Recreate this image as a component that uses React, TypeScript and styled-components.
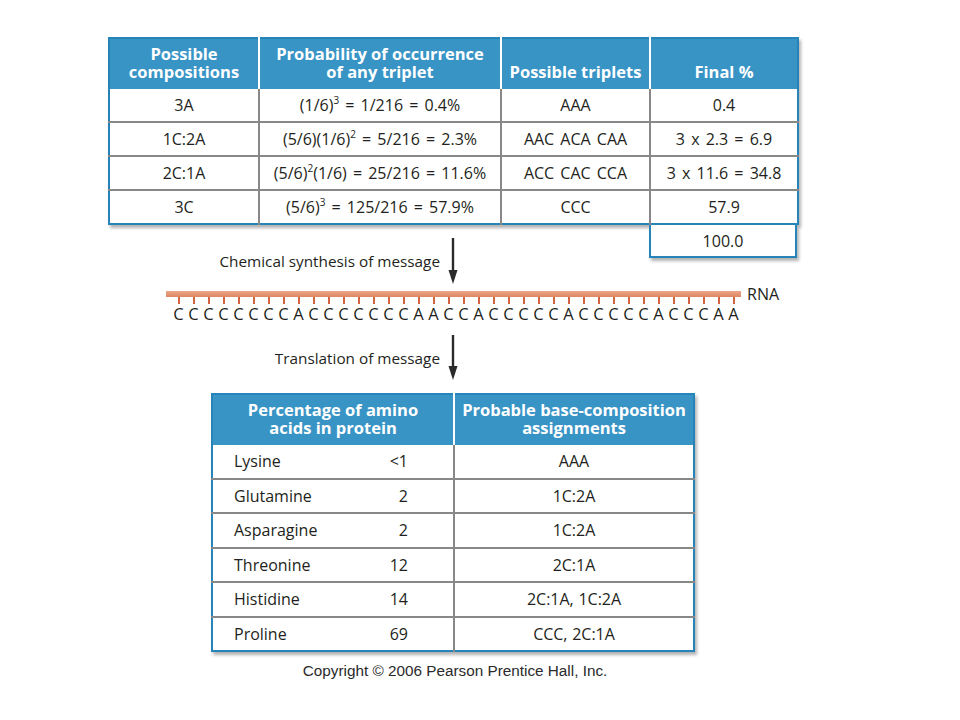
import React from 'react';
import styled, { createGlobalStyle } from 'styled-components';

const GlobalStyle = createGlobalStyle`
  html, body {
    margin: 0;
    padding: 0;
    background: #fff;
  }
  body {
    font-family: "Open Sans", "Noto Sans", sans-serif;
    color: #231f20;
  }
`;

const BLUE = '#2784b8';
const HEAD = '#3994c6';
const GRID = '#888';

const Page = styled.div`
  width: 960px;
  height: 720px;
  box-sizing: border-box;
  padding-top: 37px;
  display: flex;
  flex-direction: column;
`;

const Table = styled.table<{ $left: number; $width: number; $top?: number }>`
  margin-left: ${p => p.$left}px;
  margin-top: ${p => p.$top ?? 0}px;
  width: ${p => p.$width}px;
  border-collapse: collapse;
  table-layout: fixed;
  border: 2px solid ${BLUE};
  box-shadow: 2px 3px 3px rgba(0, 0, 0, 0.3);
  font-size: 16px;
  line-height: 18px;

  tbody tr:first-child td {
    border-top-style: none;
  }
`;

const Th = styled.th`
  height: 42px;
  padding: 0 4px 8px;
  background: ${HEAD};
  color: #fff;
  font-size: 16.5px;
  font-weight: 700;
  line-height: 18px;
  vertical-align: bottom;
  border-left: 2px solid #fff;

  &:first-child {
    border-left-style: none;
  }
`;

const Td = styled.td<{ $h: number; $spread?: boolean }>`
  height: ${p => p.$h}px;
  padding: 0;
  text-align: center;
  vertical-align: middle;
  word-spacing: ${p => (p.$spread ? 2 : 0.5)}px;
  border-top: 2px solid ${GRID};
  border-left: 2px solid ${GRID};

  &:first-child {
    border-left-style: none;
  }
`;

const Sup = styled.sup`
  font-size: 10px;
  line-height: 0;
  vertical-align: 7px;
`;

const AminoCell = styled.div`
  display: flex;
  justify-content: space-between;
  padding: 0 45px 0 21px;
`;

const MidRow = styled.div<{ $top: number }>`
  margin-top: ${p => p.$top}px;
  display: flex;
  align-items: flex-start;
`;

const ArrowLabel = styled.div`
  width: 462px;
  display: flex;
  align-items: center;
  justify-content: flex-end;
  gap: 4px;
  font-size: 15.3px;
  line-height: 18px;
`;

const TotalBox = styled.div`
  margin-left: 187px;
  margin-top: -13px;
  width: 148px;
  height: 33px;
  box-sizing: border-box;
  border: 2px solid ${BLUE};
  border-top: none;
  background: #fff;
  box-shadow: 2px 3px 3px rgba(0, 0, 0, 0.3);
  display: flex;
  align-items: center;
  justify-content: center;
  font-size: 16px;
`;

const Strand = styled.div`
  margin-left: 166px;
  margin-top: 7px;
  display: flex;
  flex-direction: column;
`;

const BarRow = styled.div`
  height: 6px;
  display: flex;
  align-items: center;
`;

const Bar = styled.div`
  width: 575px;
  height: 6px;
  background: linear-gradient(#eba88a, #dd8764);
`;

const RnaLabel = styled.span`
  margin-left: 6px;
  font-size: 16px;
  line-height: 18px;
`;

const Bases = styled.div`
  display: flex;
  padding-left: 5px;
`;

const Base = styled.div`
  width: 15px;
  display: flex;
  flex-direction: column;
  align-items: center;
  font-size: 16.5px;
  line-height: 18px;
`;

const Tick = styled.div`
  width: 2px;
  height: 7px;
  margin-bottom: 1px;
  background: #d4643f;
`;

const Copyright = styled.div`
  width: 910px;
  margin-top: 10px;
  text-align: center;
  font-family: "Liberation Sans", Arial, sans-serif;
  font-size: 15.3px;
  line-height: 18px;
  color: #2a2a2a;
`;

const DownArrow = ({ h }: { h: number }) => (
  <svg width="18" height={h} viewBox={`0 0 18 ${h}`}>
    <line x1="9" y1="0" x2="9" y2={h - 10} stroke="#2b2b2b" strokeWidth="2.4" />
    <polygon points={`4.5,${h - 14} 13.5,${h - 14} 9,${h}`} fill="#2b2b2b" />
  </svg>
);

const tripletRows = [
  { comp: '3A', prob: <>(1/6)<Sup>3</Sup> = 1/216 = 0.4%</>, trip: 'AAA', fin: '0.4' },
  { comp: '1C:2A', prob: <>(5/6)(1/6)<Sup>2</Sup> = 5/216 = 2.3%</>, trip: 'AAC ACA CAA', fin: '3 x 2.3 = 6.9' },
  { comp: '2C:1A', prob: <>(5/6)<Sup>2</Sup>(1/6) = 25/216 = 11.6%</>, trip: 'ACC CAC CCA', fin: '3 x 11.6 = 34.8' },
  { comp: '3C', prob: <>(5/6)<Sup>3</Sup> = 125/216 = 57.9%</>, trip: 'CCC', fin: '57.9' },
];

const aminoRows = [
  { name: 'Lysine', pct: '<1', assign: 'AAA' },
  { name: 'Glutamine', pct: '2', assign: '1C:2A' },
  { name: 'Asparagine', pct: '2', assign: '1C:2A' },
  { name: 'Threonine', pct: '12', assign: '2C:1A' },
  { name: 'Histidine', pct: '14', assign: '2C:1A, 1C:2A' },
  { name: 'Proline', pct: '69', assign: 'CCC, 2C:1A' },
];

const sequence = 'CCCCCCCCACCCCCCCAACCACCCCCACCCCCACCCAA';

export default function App() {
  return (
    <>
      <GlobalStyle />
      <Page>
        <Table $left={108} $width={689}>
          <colgroup>
            <col style={{ width: 150 }} />
            <col style={{ width: 242 }} />
            <col style={{ width: 149 }} />
            <col style={{ width: 148 }} />
          </colgroup>
          <thead>
            <tr>
              <Th>Possible<br />compositions</Th>
              <Th>Probability of occurrence<br />of any triplet</Th>
              <Th>Possible triplets</Th>
              <Th>Final %</Th>
            </tr>
          </thead>
          <tbody>
            {tripletRows.map(r => (
              <tr key={r.comp}>
                <Td $h={32}>{r.comp}</Td>
                <Td $h={32} $spread>{r.prob}</Td>
                <Td $h={32} $spread>{r.trip}</Td>
                <Td $h={32} $spread>{r.fin}</Td>
              </tr>
            ))}
          </tbody>
        </Table>

        <MidRow $top={13}>
          <ArrowLabel>
            Chemical synthesis of message
            <DownArrow h={46} />
          </ArrowLabel>
          <TotalBox>100.0</TotalBox>
        </MidRow>

        <Strand>
          <BarRow>
            <Bar />
            <RnaLabel>RNA</RnaLabel>
          </BarRow>
          <Bases>
            {sequence.split('').map((b, i) => (
              <Base key={i}>
                <Tick />
                {b}
              </Base>
            ))}
          </Bases>
        </Strand>

        <MidRow $top={12}>
          <ArrowLabel>
            Translation of message
            <DownArrow h={45} />
          </ArrowLabel>
        </MidRow>

        <Table $left={211} $width={482} $top={13}>
          <colgroup>
            <col style={{ width: 242 }} />
            <col style={{ width: 240 }} />
          </colgroup>
          <thead>
            <tr>
              <Th>Percentage of amino<br />acids in protein</Th>
              <Th>Probable base-composition<br />assignments</Th>
            </tr>
          </thead>
          <tbody>
            {aminoRows.map(r => (
              <tr key={r.name}>
                <Td $h={32.5}>
                  <AminoCell>
                    <span>{r.name}</span>
                    <span>{r.pct}</span>
                  </AminoCell>
                </Td>
                <Td $h={32.5}>{r.assign}</Td>
              </tr>
            ))}
          </tbody>
        </Table>

        <Copyright>Copyright © 2006 Pearson Prentice Hall, Inc.</Copyright>
      </Page>
    </>
  );
}
